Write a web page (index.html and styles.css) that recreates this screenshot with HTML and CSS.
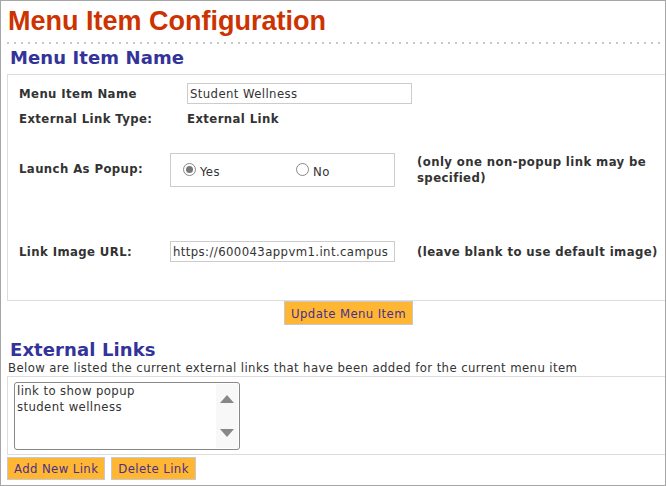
FILE: index.html
```html
<!DOCTYPE html>
<html lang="en">
<head>
  <meta charset="UTF-8" />
  <title>Menu Item Configuration</title>
  <link rel="stylesheet" href="styles.css">
</head>
<body>
  <div class="page">
    <h1>Menu Item Configuration</h1>
    <div class="dots"></div>

    <!-- Menu item name -->
    <h2>Menu Item Name</h2>
    <div class="panel">
      <div class="row row-name">
        <span class="lbl">Menu Item Name</span>
        <input type="text" class="txt txt-name" value="Student Wellness">
      </div>
      <div class="row row-type">
        <span class="lbl">External Link Type:</span>
        <span class="lbl">External Link</span>
      </div>
      <div class="row row-popup">
        <span class="lbl">Launch As Popup:</span>
        <div class="radios">
          <label class="opt opt-yes"><span class="radio checked"></span>Yes</label>
          <label class="opt"><span class="radio"></span>No</label>
        </div>
        <span class="note">(only one non-popup link may be specified)</span>
      </div>
      <div class="row row-img">
        <span class="lbl">Link Image URL:</span>
        <input type="text" class="txt txt-url" value="https://600043appvm1.int.campus">
        <span class="note nowrap">(leave blank to use default image)</span>
      </div>
    </div>
    <div class="update">
      <button class="btn">Update Menu Item</button>
    </div>

    <!-- External links -->
    <h2 class="links-title">External Links</h2>
    <p class="desc">Below are listed the current external links that have been added for the current menu item</p>
    <div class="links">
      <div class="listbox">
        <div class="items">
          <div>link to show popup</div>
          <div>student wellness</div>
        </div>
        <div class="scroll">
          <span class="arrow up"></span>
          <span class="arrow down"></span>
        </div>
      </div>
    </div>
    <div class="actions">
      <button class="btn">Add New Link</button>
      <button class="btn">Delete Link</button>
    </div>
  </div>
</body>
</html>
```

FILE: styles.css
```css
/* BASE */
* {
  margin: 0;
  padding: 0;
  box-sizing: border-box;
}
body {
  font-family: "DejaVu Sans Condensed", "DejaVu Sans", sans-serif;
  font-size: 13px;
  letter-spacing: 0.4px;
  color: #333;
  background: #fff;
}
.page {
  height: 486px;
  border: 1px solid #a6a6a6;
  padding-left: 6px;
  overflow: hidden;
}
/* HEADINGS */
h1 {
  font-family: "Liberation Sans", Arial, sans-serif;
  font-size: 27px;
  font-weight: bold;
  letter-spacing: 0;
  color: #cc3300;
  line-height: 36px;
  padding-left: 1px;
  margin-top: 2px;
}
.dots {
  height: 2px;
  margin-top: 3px;
  background: repeating-linear-gradient(90deg, #c8c8c8 0 2px, transparent 2px 7px);
}
h2 {
  font-family: "DejaVu Sans", sans-serif;
  font-size: 18px;
  font-weight: bold;
  letter-spacing: 0.1px;
  color: #333399;
  line-height: 22px;
  padding-left: 3px;
  margin-top: 3px;
}
/* PANEL */
.panel {
  border: 1px solid #ddd;
  border-right: none;
  margin-top: 5px;
  height: 227px;
  padding: 8px 0 0 11px;
}
.row {
  display: flex;
  align-items: center;
}
.lbl {
  font-weight: bold;
}
.row-name .lbl:first-child {
  width: 168px;
}
.row-name {
  height: 21px;
}
.row-type {
  margin-top: 5px;
  height: 18px;
}
.row-type .lbl:first-child {
  width: 168px;
}
.row-popup {
  margin-top: 26px;
  height: 34px;
  align-items: flex-start;
}
.row-popup > .lbl {
  width: 151px;
  margin-top: 8px;
}
.row-popup .note {
  margin-top: 1px;
}
.row-img {
  margin-top: 54px;
  height: 21px;
}
.row-img .lbl {
  width: 151px;
}
.note {
  font-weight: bold;
  margin-left: 22px;
  line-height: 16px;
  width: 240px;
}
.nowrap {
  white-space: nowrap;
  width: auto;
}
.txt {
  height: 21px;
  border: 1px solid #ccc;
  font-family: "DejaVu Sans Condensed", "DejaVu Sans", sans-serif;
  font-size: 13px;
  letter-spacing: 0.4px;
  color: #333;
  padding: 0 2px;
}
.txt-name {
  width: 225px;
}
.txt-url {
  width: 225px;
}
.radios {
  width: 225px;
  height: 34px;
  border: 1px solid #ccc;
  display: flex;
  align-items: center;
  padding-left: 12px;
}
.opt {
  display: flex;
  align-items: center;
  padding-top: 2px;
}
.opt-yes {
  width: 113px;
}
.radio {
  width: 13px;
  height: 13px;
  border: 1px solid #888;
  border-radius: 50%;
  margin-right: 4px;
  margin-top: -3px;
  background: #fff;
  position: relative;
}
.radio.checked::after {
  content: "";
  position: absolute;
  left: 2px;
  top: 2px;
  width: 7px;
  height: 7px;
  border-radius: 50%;
  background: #777;
}
/* BUTTONS */
.btn {
  background: #ffb733;
  border: 1px solid #c6c9d2;
  color: #4a2f8c;
  font-family: "DejaVu Sans Condensed", "DejaVu Sans", sans-serif;
  font-size: 13px;
  letter-spacing: 0.4px;
  height: 24px;
  padding: 0 6px;
}
.update {
  padding-left: 277px;
}
.update .btn {
  width: 129px;
}
/* EXTERNAL LINKS */
.links-title {
  margin-top: 15px;
  line-height: 20px;
}
.desc {
  padding-left: 1px;
  line-height: 16px;
}
.links {
  border-top: 1px solid #ddd;
  border-bottom: 1px solid #ddd;
  border-left: 1px solid #ddd;
  margin-top: 0;
  height: 79px;
  padding: 5px 0 0 6px;
}
.listbox {
  width: 226px;
  height: 68px;
  border: 1px solid #888;
  border-radius: 3px;
  display: flex;
}
.items {
  flex: 1;
  padding: 0 0 0 2px;
  line-height: 16px;
}
.scroll {
  width: 22px;
  background: #f8f8f8;
  display: flex;
  flex-direction: column;
  justify-content: space-between;
  align-items: center;
  padding: 11px 0 11px;
  margin: 1px 1px 1px 0;
}
.arrow {
  width: 0;
  height: 0;
  border-left: 7px solid transparent;
  border-right: 7px solid transparent;
}
.arrow.up {
  border-bottom: 8px solid #888;
}
.arrow.down {
  border-top: 8px solid #888;
}
.actions {
  display: flex;
  gap: 6px;
  margin-top: 2px;
}
.actions .btn {
  height: 23px;
}
```
